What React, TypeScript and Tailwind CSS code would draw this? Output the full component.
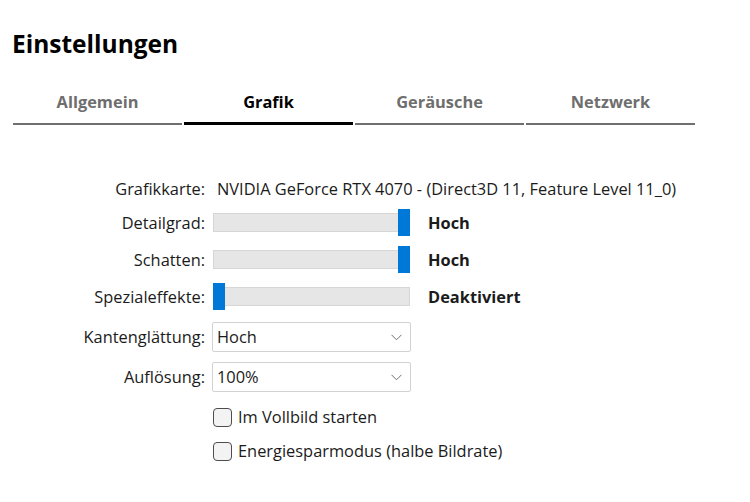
const TABS = ['Allgemein', 'Grafik', 'Geräusche', 'Netzwerk'];

const Label = ({ children }: { children: React.ReactNode }) => (
  <div className="w-[206px] shrink-0 text-right pr-px">{children}</div>
);

const Slider = ({ value, max }: { value: string; max: boolean }) => (
  <div className="flex items-center">
    <div className="relative w-[197px] h-[19px] bg-[#e6e6e6] border border-[#d6d6d6]">
      <div
        className={
          'absolute top-[-5px] h-[27px] w-[12px] bg-[#0078d7] ' +
          (max ? 'right-[-1px]' : 'left-[-1px]')
        }
      />
    </div>
    <span className="ml-[18px] font-bold">{value}</span>
  </div>
);

const Select = ({ value }: { value: string }) => (
  <div className="flex items-center justify-between w-[199px] h-[30px] border border-[#d2d2d2] rounded-[2px] bg-white pl-[4px] pr-[8px]">
    <span>{value}</span>
    <svg width="11" height="7" viewBox="0 0 11 7" fill="none">
      <path d="M0.5 0.8 L5.5 5.8 L10.5 0.8" stroke="#6e6e6e" strokeWidth="1" />
    </svg>
  </div>
);

const Check = ({ label }: { label: string }) => (
  <div className="flex items-center">
    <div className="w-[213px] shrink-0" />
    <div className="w-[19px] h-[19px] rounded-[4px] border border-[#4d4d4d] bg-[#f3f3f3]" />
    <span className="ml-[6px]">{label}</span>
  </div>
);

export default function App() {
  return (
    <div className="w-[750px] h-[502px] bg-white text-[#1b1b1b] font-['Open_Sans',sans-serif] text-[16.4px] leading-[22px] overflow-hidden">
      <h1 className="pl-[12px] pt-[26px] text-[24.5px] font-bold text-black leading-[36px]">
        Einstellungen
      </h1>

      <div className="flex gap-[2px] ml-[13px] mt-[26px]">
        {TABS.map((tab, i) => (
          <div key={tab} className="w-[169px] flex flex-col items-center">
            <div
              className={
                'h-[28px] text-[16.4px] font-bold leading-[28px] ' +
                (i === 1 ? 'text-black' : 'text-[#6e6e6e]')
              }
            >
              {tab}
            </div>
            <div
              className={
                'w-full mt-[6px] ' +
                (i === 1 ? 'h-[3px] bg-black' : 'h-[2px] mt-[7px] bg-[#6f6f6f]')
              }
            />
          </div>
        ))}
      </div>

      <div className="flex flex-col mt-[50px]">
        <div className="flex items-center h-[27px]">
          <Label>Grafikkarte:</Label>
          <span className="ml-[11px]">
            NVIDIA GeForce RTX 4070 - (Direct3D 11, Feature Level 11_0)
          </span>
        </div>
        <div className="flex items-center h-[27px] mt-[7px]">
          <Label>Detailgrad:</Label>
          <div className="ml-[7px]">
            <Slider value="Hoch" max />
          </div>
        </div>
        <div className="flex items-center h-[27px] mt-[10px]">
          <Label>Schatten:</Label>
          <div className="ml-[7px]">
            <Slider value="Hoch" max />
          </div>
        </div>
        <div className="flex items-center h-[27px] mt-[10px]">
          <Label>Spezialeffekte:</Label>
          <div className="ml-[7px]">
            <Slider value="Deaktiviert" max={false} />
          </div>
        </div>
        <div className="flex items-center h-[30px] mt-[12px]">
          <Label>Kantenglättung:</Label>
          <div className="ml-[6px]">
            <Select value="Hoch" />
          </div>
        </div>
        <div className="flex items-center h-[30px] mt-[10px]">
          <Label>Auflösung:</Label>
          <div className="ml-[6px]">
            <Select value="100%" />
          </div>
        </div>
        <div className="flex items-center h-[20px] mt-[15px]">
          <Check label="Im Vollbild starten" />
        </div>
        <div className="flex items-center h-[20px] mt-[14px]">
          <Check label="Energiesparmodus (halbe Bildrate)" />
        </div>
      </div>
    </div>
  );
}
